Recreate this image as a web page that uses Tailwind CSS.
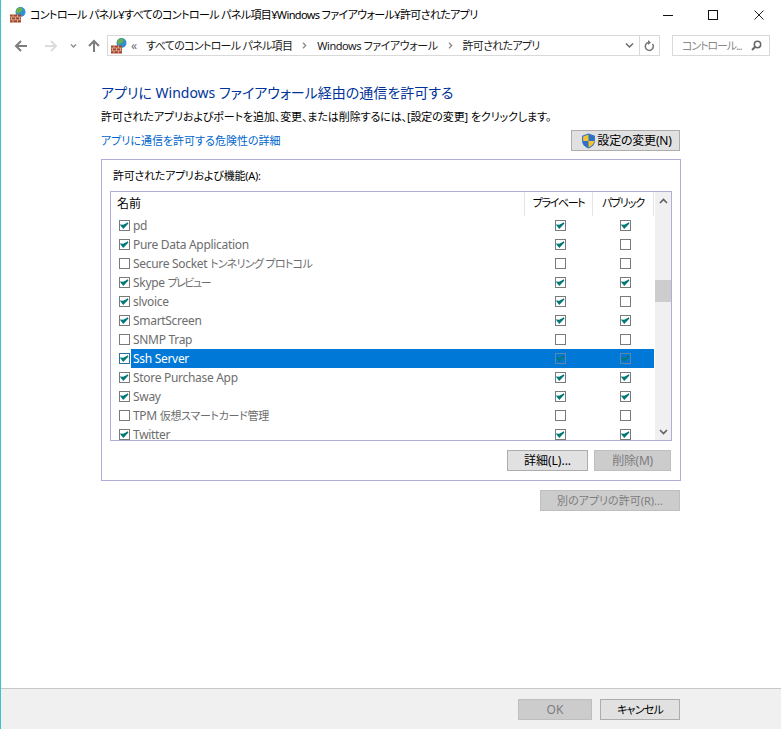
<!DOCTYPE html>
<html lang="ja">
<head>
    <meta charset="UTF-8">
    <title>許可されたアプリ</title>
    <script src="https://cdn.jsdelivr.net/npm/@tailwindcss/browser@4"></script>
</head>
<body class="font-['Noto_Sans','Noto_Sans_CJK_JP',sans-serif] text-[12px] leading-[16px] text-[#1a1a1a] [font-feature-settings:'palt']">
<svg width="0" height="0" class="absolute">
    <defs>
        <symbol id="fw" viewBox="0 0 16 16">
            <circle cx="10.500" cy="5" r="5" fill="#2f8fd0"/>
            <path d="M7 1.500c2-1.500 4-1 5 0s.5 2.500-1 3-1.500 2-3 2-2.500-3-1-5z" fill="#6ab04a"/>
            <path d="M0 7.500h11V15.500H0z" fill="#a5442c"/>
            <path d="M0 10h11M0 12.800h11M3 7.500V10M7.500 7.500V10M1.500 10v2.800M5.500 10v2.800M9.500 10v2.800M3 12.800v2.700M7.500 12.800v2.700" stroke="#e0b8a0" stroke-width=".8" fill="none"/>
        </symbol>
        <symbol id="on" viewBox="0 0 11 11">
            <rect x=".5" y=".5" width="10" height="10" fill="#fff" stroke="#7a7a7a"/>
            <path d="M2 5.200l2.300 2.900L9 3 4.500 5.300z" fill="#00787a" stroke="#00787a" stroke-width="1.200"/>
        </symbol>
        <symbol id="off" viewBox="0 0 11 11">
            <rect x=".5" y=".5" width="10" height="10" fill="#fff" stroke="#7a7a7a"/>
        </symbol>
        <symbol id="sel" viewBox="0 0 11 11">
            <rect x=".5" y=".5" width="10" height="10" fill="#fff" stroke="#2f6f9f"/>
            <path d="M2 5.200l2.300 2.900L9 3 4.500 5.300z" fill="#00787a" stroke="#00787a" stroke-width="1.200"/>
        </symbol>
        <symbol id="dim" viewBox="0 0 11 11">
            <rect x=".5" y=".5" width="10" height="10" fill="#0078d7" stroke="#5f86a6"/>
            <path d="M2 5.200l2.300 2.900L9 3 4.500 5.300z" fill="#00787a" stroke="#00787a" stroke-width="1.200"/>
        </symbol>
    </defs>
</svg>

<div class="flex h-[729px] w-[781px] flex-col overflow-hidden border-l border-[#3cc0cc] bg-white">

    <!-- title bar -->
    <header class="flex h-[30px] shrink-0 items-center pl-[9px]">
        <svg class="h-[16px] w-[16px]"><use href="#fw"/></svg>
        <span class="ml-[4px] whitespace-nowrap text-[11px] tracking-[-0.63px] text-black">コントロール パネル¥すべてのコントロール パネル項目¥Windows ファイアウォール¥許可されたアプリ</span>
        <div class="ml-auto flex items-center">
            <svg class="mr-[35px] h-[10px] w-[10px]" viewBox="0 0 10 10"><path d="M0 5.500h10" stroke="#111"/></svg>
            <svg class="mr-[36px] h-[10px] w-[10px]" viewBox="0 0 10 10"><rect x=".5" y=".5" width="9" height="9" fill="none" stroke="#111"/></svg>
            <svg class="mr-[17px] h-[10px] w-[10px]" viewBox="0 0 10 10"><path d="M.5.500l9 9M9.500.500l-9 9" stroke="#222" fill="none"/></svg>
        </div>
    </header>

    <!-- nav + address bar -->
    <nav class="mt-[5px] flex h-[21px] shrink-0 items-center">
        <svg class="ml-[13px] h-[14px] w-[14px]" viewBox="0 0 14 14"><path d="M13 7H2M7 2L2 7l5 5" fill="none" stroke="#7d7d7d" stroke-width="2"/></svg>
        <svg class="ml-[16px] h-[14px] w-[14px]" viewBox="0 0 14 14"><path d="M1 7h11M7 2l5 5-5 5" fill="none" stroke="#dcdcdc" stroke-width="2"/></svg>
        <svg class="ml-[12px] h-[6px] w-[7px]" viewBox="0 0 7 6"><path d="M1 1.500l2.500 2.500L6 1.500" fill="none" stroke="#8a8a8a" stroke-width="1.300"/></svg>
        <svg class="ml-[10px] h-[14px] w-[14px]" viewBox="0 0 14 14"><path d="M7 13V2M2 7l5-5 5 5" fill="none" stroke="#7d7d7d" stroke-width="2"/></svg>
        <div class="ml-[6px] flex h-[21px] w-[553px] items-center border border-[#d9d9d9]">
            <svg class="ml-[3px] h-[16px] w-[16px]"><use href="#fw"/></svg>
            <span class="ml-[4px] text-[#6d6d6d]">«</span>
            <span class="ml-[9px] whitespace-nowrap text-[11px] tracking-[-0.7px]">すべてのコントロール パネル項目</span>
            <svg class="ml-[10px] h-[7px] w-[5px]" viewBox="0 0 5 7"><path d="M1 .8l2.700 2.700L1 6.200" fill="none" stroke="#8a8a8a" stroke-width="1.300"/></svg>
            <span class="ml-[10px] whitespace-nowrap text-[11px] tracking-[-0.45px]">Windows ファイアウォール</span>
            <svg class="ml-[10px] h-[7px] w-[5px]" viewBox="0 0 5 7"><path d="M1 .8l2.700 2.700L1 6.200" fill="none" stroke="#8a8a8a" stroke-width="1.300"/></svg>
            <span class="ml-[10px] whitespace-nowrap text-[11px] tracking-[-0.7px]">許可されたアプリ</span>
            <svg class="ml-auto mr-[5px] h-[7px] w-[9px]" viewBox="0 0 9 7"><path d="M1 1.500L4.500 5 8 1.500" fill="none" stroke="#6a6a6a" stroke-width="1.500"/></svg>
            <div class="flex h-full w-[20px] items-center justify-center border-l border-[#d9d9d9]">
                <svg class="h-[12px] w-[11px]" viewBox="0 0 11 12"><path d="M8.500 4a4 4 0 1 1-4-1.500" fill="none" stroke="#777" stroke-width="1.500"/><path d="M4 0l3 2.500L4 5z" fill="#777"/></svg>
            </div>
        </div>
        <div class="ml-[12px] flex h-[21px] w-[98px] items-center border border-[#d9d9d9] pl-[9px] text-[#8a8a8a]">
            <span class="whitespace-nowrap text-[11px] tracking-[-1.1px]">コントロール...</span>
            <svg class="ml-auto mr-[7px] h-[11px] w-[11px]" viewBox="0 0 11 11"><circle cx="6.500" cy="4.500" r="3.200" fill="none" stroke="#666" stroke-width="1.500"/><path d="M4 7l-3 3" stroke="#666" stroke-width="2"/></svg>
        </div>
    </nav>

    <!-- content -->
    <main class="ml-[100px] w-[580px] flex-1">
        <h1 class="mt-[27px] h-[20px] whitespace-nowrap text-[14px] leading-[20px] text-[#003399]">アプリに Windows ファイアウォール経由の通信を許可する</h1>
        <p class="mt-[6px] whitespace-nowrap text-[11px] tracking-[-0.1px] text-black">許可されたアプリおよびポートを追加、変更、または削除するには、[設定の変更] をクリックします。</p>
        <div class="mt-[5px] flex h-[21px] items-center justify-between pr-[1px]">
            <a class="whitespace-nowrap pt-[1px] text-[11px] text-[#0066cc]">アプリに通信を許可する危険性の詳細</a>
            <button class="flex h-[21px] w-[109px] items-center justify-center gap-[1px] border border-[#adadad] bg-[#e1e1e1] pl-[2px] text-black">
                <svg class="h-[16px] w-[15px]" viewBox="0 0 14 15"><path d="M7 .5l6 2v5c0 3.500-3 6-6 7-3-1-6-3.500-6-7v-5z" fill="#2f6fc4"/><path d="M7 1.500v6H2v-4.300zM7 7.500h5.500c-.3 2.800-3 5-5.500 6z" fill="#f7c22f"/></svg>
                <span class="whitespace-nowrap tracking-[-0.2px]">設定の変更(N)</span>
            </button>
        </div>

        <!-- group box -->
        <section class="mt-[8px] h-[322px] border border-[#aeaed8] pl-[8px] pr-[8px]">
            <p class="ml-[3px] mt-[8px] h-[16px] whitespace-nowrap text-[11px] tracking-[-0.25px] text-black">許可されたアプリおよび機能(A):</p>
            <div class="mt-[7px] flex h-[250px] w-[562px] border border-[#aeaed8]">
                <div class="w-[544px] overflow-hidden">
                    <div class="flex h-[24px] text-black">
                        <span class="w-[413px] pl-[6px] pt-[4px]">名前</span>
                        <span class="w-[69px] whitespace-nowrap border-x border-[#e5e5e5] pt-[3px] text-center text-[11px] tracking-[-1.4px]">プライベート</span>
                        <span class="w-[61px] whitespace-nowrap border-r border-[#e5e5e5] pt-[3px] text-center text-[11px] tracking-[-1.1px]">パブリック</span>
                    </div>
                    <ul class="w-[543px] text-[#6d6d6d]">
                        <li class="flex h-[19px] items-center"><svg class="ml-[8px] h-[11px] w-[11px] shrink-0"><use href="#on"/></svg><span class="ml-[1px] flex-1 pl-[2px] pt-[1px] leading-[18px] tracking-[-0.3px]">pd</span><span class="flex w-[68px] justify-center pl-[2px]"><svg class="h-[11px] w-[11px]"><use href="#on"/></svg></span><span class="flex w-[61px] justify-center pl-[3px]"><svg class="h-[11px] w-[11px]"><use href="#on"/></svg></span></li>
                        <li class="flex h-[19px] items-center"><svg class="ml-[8px] h-[11px] w-[11px] shrink-0"><use href="#on"/></svg><span class="ml-[1px] flex-1 pl-[2px] pt-[1px] leading-[18px] tracking-[-0.3px]">Pure Data Application</span><span class="flex w-[68px] justify-center pl-[2px]"><svg class="h-[11px] w-[11px]"><use href="#on"/></svg></span><span class="flex w-[61px] justify-center pl-[3px]"><svg class="h-[11px] w-[11px]"><use href="#off"/></svg></span></li>
                        <li class="flex h-[19px] items-center"><svg class="ml-[8px] h-[11px] w-[11px] shrink-0"><use href="#off"/></svg><span class="ml-[1px] flex-1 pl-[2px] pt-[1px] leading-[18px] tracking-[-0.3px]">Secure Socket <span class="text-[11px] tracking-[-0.7px]">トンネリング プロトコル</span></span><span class="flex w-[68px] justify-center pl-[2px]"><svg class="h-[11px] w-[11px]"><use href="#off"/></svg></span><span class="flex w-[61px] justify-center pl-[3px]"><svg class="h-[11px] w-[11px]"><use href="#off"/></svg></span></li>
                        <li class="flex h-[19px] items-center"><svg class="ml-[8px] h-[11px] w-[11px] shrink-0"><use href="#on"/></svg><span class="ml-[1px] flex-1 pl-[2px] pt-[1px] leading-[18px] tracking-[-0.3px]">Skype <span class="text-[11px] tracking-[-1.500px]">プレビュー</span></span><span class="flex w-[68px] justify-center pl-[2px]"><svg class="h-[11px] w-[11px]"><use href="#on"/></svg></span><span class="flex w-[61px] justify-center pl-[3px]"><svg class="h-[11px] w-[11px]"><use href="#on"/></svg></span></li>
                        <li class="flex h-[19px] items-center"><svg class="ml-[8px] h-[11px] w-[11px] shrink-0"><use href="#on"/></svg><span class="ml-[1px] flex-1 pl-[2px] pt-[1px] leading-[18px] tracking-[-0.3px]">slvoice</span><span class="flex w-[68px] justify-center pl-[2px]"><svg class="h-[11px] w-[11px]"><use href="#on"/></svg></span><span class="flex w-[61px] justify-center pl-[3px]"><svg class="h-[11px] w-[11px]"><use href="#off"/></svg></span></li>
                        <li class="flex h-[19px] items-center"><svg class="ml-[8px] h-[11px] w-[11px] shrink-0"><use href="#on"/></svg><span class="ml-[1px] flex-1 pl-[2px] pt-[1px] leading-[18px] tracking-[-0.3px]">SmartScreen</span><span class="flex w-[68px] justify-center pl-[2px]"><svg class="h-[11px] w-[11px]"><use href="#on"/></svg></span><span class="flex w-[61px] justify-center pl-[3px]"><svg class="h-[11px] w-[11px]"><use href="#on"/></svg></span></li>
                        <li class="flex h-[19px] items-center"><svg class="ml-[8px] h-[11px] w-[11px] shrink-0"><use href="#off"/></svg><span class="ml-[1px] flex-1 pl-[2px] pt-[1px] leading-[18px] tracking-[-0.3px]">SNMP Trap</span><span class="flex w-[68px] justify-center pl-[2px]"><svg class="h-[11px] w-[11px]"><use href="#off"/></svg></span><span class="flex w-[61px] justify-center pl-[3px]"><svg class="h-[11px] w-[11px]"><use href="#off"/></svg></span></li>
                        <li class="flex h-[19px] items-center"><svg class="ml-[8px] h-[11px] w-[11px] shrink-0"><use href="#sel"/></svg><div class="ml-[1px] flex h-full flex-1 items-center bg-[#0078d7]"><span class="flex-1 pl-[2px] pt-[1px] leading-[18px] tracking-[-0.3px] text-white">Ssh Server</span><span class="flex w-[68px] justify-center pl-[2px]"><svg class="h-[11px] w-[11px]"><use href="#dim"/></svg></span><span class="flex w-[61px] justify-center pl-[3px]"><svg class="h-[11px] w-[11px]"><use href="#dim"/></svg></span></div></li>
                        <li class="flex h-[19px] items-center"><svg class="ml-[8px] h-[11px] w-[11px] shrink-0"><use href="#on"/></svg><span class="ml-[1px] flex-1 pl-[2px] pt-[1px] leading-[18px] tracking-[-0.3px]">Store Purchase App</span><span class="flex w-[68px] justify-center pl-[2px]"><svg class="h-[11px] w-[11px]"><use href="#on"/></svg></span><span class="flex w-[61px] justify-center pl-[3px]"><svg class="h-[11px] w-[11px]"><use href="#on"/></svg></span></li>
                        <li class="flex h-[19px] items-center"><svg class="ml-[8px] h-[11px] w-[11px] shrink-0"><use href="#on"/></svg><span class="ml-[1px] flex-1 pl-[2px] pt-[1px] leading-[18px] tracking-[-0.3px]">Sway</span><span class="flex w-[68px] justify-center pl-[2px]"><svg class="h-[11px] w-[11px]"><use href="#on"/></svg></span><span class="flex w-[61px] justify-center pl-[3px]"><svg class="h-[11px] w-[11px]"><use href="#on"/></svg></span></li>
                        <li class="flex h-[19px] items-center"><svg class="ml-[8px] h-[11px] w-[11px] shrink-0"><use href="#off"/></svg><span class="ml-[1px] flex-1 pl-[2px] pt-[1px] leading-[18px] tracking-[-0.3px]">TPM <span class="text-[11px]">仮想スマートカード管理</span></span><span class="flex w-[68px] justify-center pl-[2px]"><svg class="h-[11px] w-[11px]"><use href="#off"/></svg></span><span class="flex w-[61px] justify-center pl-[3px]"><svg class="h-[11px] w-[11px]"><use href="#off"/></svg></span></li>
                        <li class="flex h-[19px] items-center"><svg class="ml-[8px] h-[11px] w-[11px] shrink-0"><use href="#on"/></svg><span class="ml-[1px] flex-1 pl-[2px] pt-[1px] leading-[18px] tracking-[-0.3px]">Twitter</span><span class="flex w-[68px] justify-center pl-[2px]"><svg class="h-[11px] w-[11px]"><use href="#on"/></svg></span><span class="flex w-[61px] justify-center pl-[3px]"><svg class="h-[11px] w-[11px]"><use href="#on"/></svg></span></li>
                    </ul>
                </div>
                <!-- scrollbar -->
                <div class="flex w-[16px] flex-col items-center bg-[#f0f0f0]">
                    <svg class="mt-[6px] h-[6px] w-[9px]" viewBox="0 0 9 6"><path d="M1 5l3.500-3.500L8 5" fill="none" stroke="#606060" stroke-width="1.600"/></svg>
                    <div class="mt-[76px] h-[22px] w-full bg-[#cdcdcd]"></div>
                    <svg class="mb-[5px] mt-auto h-[6px] w-[9px]" viewBox="0 0 9 6"><path d="M1 1l3.500 3.500L8 1" fill="none" stroke="#606060" stroke-width="1.600"/></svg>
                </div>
            </div>
            <div class="mt-[9px] flex w-[561px] justify-end gap-[6px]">
                <button class="h-[21px] w-[81px] border border-[#adadad] bg-[#e1e1e1] text-black">詳細(L)...</button>
                <button class="h-[21px] w-[77px] border border-[#bfbfbf] bg-[#cccccc] tracking-[-0.3px] text-[#7d7d7d]">削除(M)</button>
            </div>
        </section>

        <div class="mt-[9px] flex justify-end pr-[1px]">
            <button class="h-[21px] w-[140px] border border-[#bfbfbf] bg-[#cccccc] text-[11px] text-[#7d7d7d]">別のアプリの許可(R)...</button>
        </div>
    </main>

    <!-- footer -->
    <footer class="flex h-[41px] shrink-0 items-start justify-end gap-[8px] border-t border-[#c8c8c8] bg-[#f0f0f0] pr-[101px] pt-[10px]">
        <button class="h-[21px] w-[74px] border border-[#bfbfbf] bg-[#cccccc] text-[#7d7d7d]">OK</button>
        <button class="h-[21px] w-[80px] border border-[#adadad] bg-[#e1e1e1] text-[11px] tracking-[-0.8px] text-black">キャンセル</button>
    </footer>
</div>
</body>
</html>
